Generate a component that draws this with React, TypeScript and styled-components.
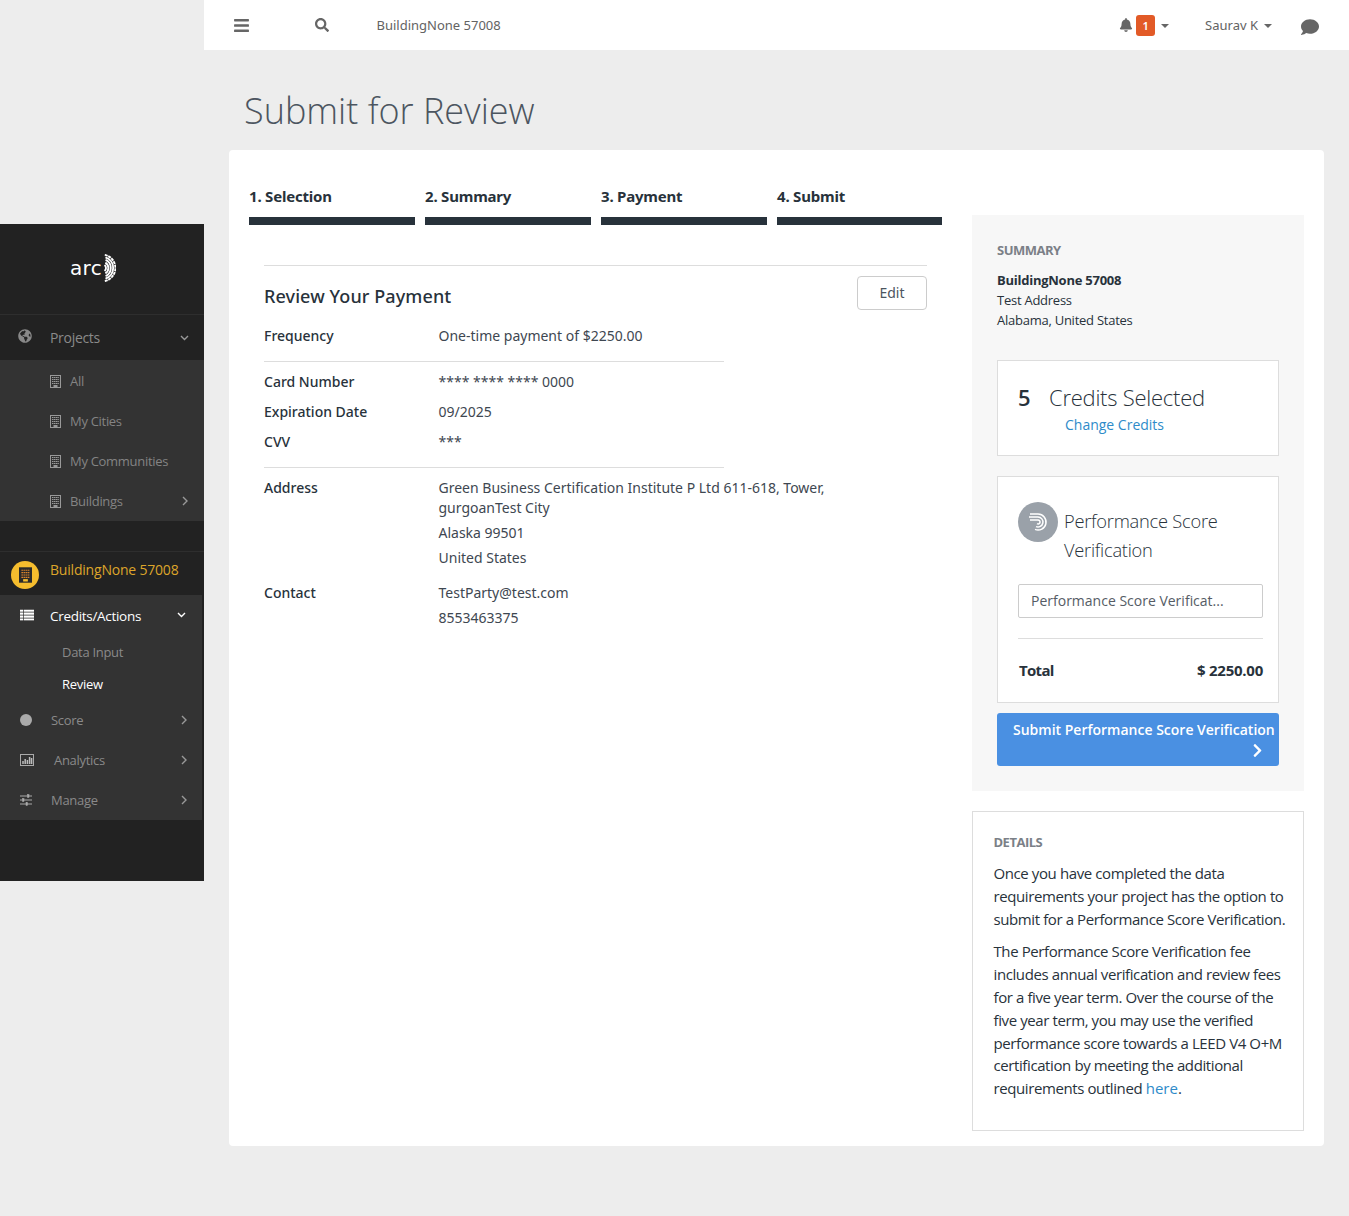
import React from "react";
import styled, { createGlobalStyle } from "styled-components";
import { FaBars, FaBell, FaChevronRight, FaComment, FaGlobeAmericas, FaSearch } from "react-icons/fa";

const GlobalStyle = createGlobalStyle`
  html, body { margin: 0; padding: 0; }
  body {
    background: #ededed;
    font-family: "Noto Sans", "Open Sans", sans-serif;
    color: #28323b;
  }
  * { box-sizing: border-box; }
`;

const BuildingIcon: React.FC<{ w?: number; h?: number; body?: string; cell?: string; line?: string; door?: string }> = ({
  w = 11,
  h = 13,
  body = "#333",
  cell = "#999",
  line = "#999",
  door = "#999",
}) => (
  <svg width={w} height={h} viewBox="0 0 11 13">
    <rect x=".5" y=".5" width="10" height="12" fill={body} stroke={line} />
    {[2, 4, 6, 8].map((y) => (
      <path key={y} d={`M2 ${y + 0.5}h7`} stroke={cell} strokeWidth="1" strokeDasharray="1.4 .4" />
    ))}
    <rect x="3.5" y="10" width="4" height="2" fill={door} />
  </svg>
);

const ChevronDown = () => (
  <svg width="9" height="6" viewBox="0 0 9 6" fill="none" stroke="currentColor" strokeWidth="1.4">
    <path d="M1 1l3.5 3.5L8 1" />
  </svg>
);

const ChevronRight = () => (
  <svg width="6" height="10" viewBox="0 0 6 10" fill="none" stroke="currentColor" strokeWidth="1.4">
    <path d="M1 1l4 4-4 4" />
  </svg>
);

const ListIcon = () => (
  <svg width="14" height="11" viewBox="0 0 14 11" fill="#fff">
    {[0, 3, 6, 9].map((y) => (
      <React.Fragment key={y}>
        <rect x="0" y={y} width="3" height="2.2" />
        <rect x="3.7" y={y} width="10.3" height="2.2" />
      </React.Fragment>
    ))}
  </svg>
);

const ChartIcon = () => (
  <svg width="14" height="12" viewBox="0 0 14 12">
    <rect x=".5" y=".5" width="13" height="11" fill="none" stroke="#aaa" />
    <path d="M3 10V7M5.2 10V5M7.4 10V6M9.6 10V3M11.6 10V4" stroke="#bbb" strokeWidth="1.5" />
  </svg>
);

const SlidersIcon = () => (
  <svg width="12" height="12" viewBox="0 0 12 12" stroke="#aaa" fill="#aaa">
    <path d="M0 2h12M0 6h12M0 10h12" strokeWidth="1" />
    <rect x="7.5" y=".5" width="1.5" height="3" strokeWidth=".5" />
    <rect x="2.5" y="4.5" width="1.5" height="3" strokeWidth=".5" />
    <rect x="6" y="8.5" width="1.5" height="3" strokeWidth=".5" />
  </svg>
);

const Dot = styled.span`
  display: block;
  width: 12px;
  height: 12px;
  border-radius: 50%;
  background: #aaa;
`;

// fan of arcs around the point just left of the mark
const arcPath = (r: number, deg: number) => {
  const a = (deg * Math.PI) / 180;
  const x = 1 + r * Math.cos(a);
  const dy = r * Math.sin(a);
  return `M${x.toFixed(2)} ${(14 - dy).toFixed(2)}A${r} ${r} 0 0 1 ${x.toFixed(2)} ${(14 + dy).toFixed(2)}`;
};

const ArcLogo = () => (
  <LogoWrap>
    <LogoText>arc</LogoText>
    <svg width="15" height="28" viewBox="0 0 15 28" fill="none" stroke="#fff" strokeWidth="1.9">
      <path d={arcPath(4, 50)} />
      <path d={arcPath(6.4, 58)} />
      <path d={arcPath(8.8, 66)} />
      <path d={arcPath(11.2, 72)} />
      <path d={arcPath(13.4, 78)} strokeDasharray="3 .7" />
    </svg>
  </LogoWrap>
);

const ScoreIcon = () => (
  <ScoreCircle>
    <svg width="20" height="20" viewBox="0 0 20 20" fill="none" stroke="#fff" strokeWidth="1.5">
      <path d="M2 2h8a8 8 0 1 1-3 15.4" />
      <path d="M1 5h9a5 5 0 1 1-2 9.6" />
      <path d="M2 8h8a2 2 0 1 1-1 3.7" />
    </svg>
  </ScoreCircle>
);

const App: React.FC = () => {
  return (
    <Page>
      <GlobalStyle />
      <Sidebar>
        <LogoBar>
          <ArcLogo />
        </LogoBar>
        <TopRow>
          <RowIcon $left={18} $top={-2}>
            <FaGlobeAmericas size={14} color="#888" />
          </RowIcon>
          <RowLabel $left={50} $size={14}>
            Projects
          </RowLabel>
          <RowArrow $right={15}>
            <ChevronDown />
          </RowArrow>
        </TopRow>
        <SubPanel>
          {["All", "My Cities", "My Communities", "Buildings"].map((name) => (
            <ProjectRow key={name}>
              <BuildingIcon />
              <ProjectLabel>{name}</ProjectLabel>
              {name === "Buildings" && (
                <RowArrow $right={16}>
                  <ChevronRight />
                </RowArrow>
              )}
            </ProjectRow>
          ))}
        </SubPanel>
        <Spacer />
        <CurrentRow>
          <CurrentBadge>
            <BuildingIcon w={13} h={16} body="#2a2a2a" line="#2a2a2a" cell="#d8822a" door="#f5bd2e" />
          </CurrentBadge>
          <CurrentName>BuildingNone 57008</CurrentName>
        </CurrentRow>
        <NavPanel>
          <NavRow $active>
            <RowIcon $left={20}>
              <ListIcon />
            </RowIcon>
            <RowLabel $left={50} $active $size={13.5}>
              Credits/Actions
            </RowLabel>
            <RowArrow $right={16} $active>
              <ChevronDown />
            </RowArrow>
          </NavRow>
          <SubLink>Data Input</SubLink>
          <SubLink $active>Review</SubLink>
          <NavRow>
            <RowIcon $left={20}>
              <Dot />
            </RowIcon>
            <RowLabel $left={51}>Score</RowLabel>
            <RowArrow $right={15}>
              <ChevronRight />
            </RowArrow>
          </NavRow>
          <NavRow>
            <RowIcon $left={20}>
              <ChartIcon />
            </RowIcon>
            <RowLabel $left={54}>Analytics</RowLabel>
            <RowArrow $right={15}>
              <ChevronRight />
            </RowArrow>
          </NavRow>
          <NavRow>
            <RowIcon $left={20}>
              <SlidersIcon />
            </RowIcon>
            <RowLabel $left={51}>Manage</RowLabel>
            <RowArrow $right={15}>
              <ChevronRight />
            </RowArrow>
          </NavRow>
        </NavPanel>
        <SidebarFoot />
      </Sidebar>

      <Main>
        <TopBar>
          <BarsButton>
            <FaBars size={17} color="#666" />
          </BarsButton>
          <SearchButton>
            <FaSearch size={14} color="#666" />
          </SearchButton>
          <TopTitle>BuildingNone 57008</TopTitle>
          <TopRight>
            <FaBell size={14} color="#666" />
            <CountBadge>1</CountBadge>
            <Caret />
            <UserName>Saurav K</UserName>
            <Caret />
            <ChatButton>
              <FaComment size={18} color="#666" />
            </ChatButton>
          </TopRight>
        </TopBar>

        <PageTitle>Submit for Review</PageTitle>

        <Card>
          <LeftColumn>
            <Steps>
              {["1. Selection", "2. Summary", "3. Payment", "4. Submit"].map((step) => (
                <Step key={step}>{step}</Step>
              ))}
            </Steps>
            <Review>
              <ReviewHead>
                <ReviewTitle>Review Your Payment</ReviewTitle>
                <EditButton>Edit</EditButton>
              </ReviewHead>
              <Row $h={30} $pad={5}>
                <Label>Frequency</Label>
                <Value>One-time payment of $2250.00</Value>
              </Row>
              <ShortRule />
              <Row $h={30}>
                <Label>Card Number</Label>
                <Value>**** **** **** 0000</Value>
              </Row>
              <Row $h={30}>
                <Label>Expiration Date</Label>
                <Value>09/2025</Value>
              </Row>
              <Row $h={30}>
                <Label>CVV</Label>
                <Value>***</Value>
              </Row>
              <ShortRule $top={5} />
              <Row>
                <Label>Address</Label>
                <Value>
                  <ValueWrap>Green Business Certification Institute P Ltd 611-618, Tower, gurgoanTest City</ValueWrap>
                  <ValueLine>Alaska 99501</ValueLine>
                  <ValueLine>United States</ValueLine>
                </Value>
              </Row>
              <Row $gap={15}>
                <Label>Contact</Label>
                <Value>
                  <div>TestParty@test.com</div>
                  <ValueLine>8553463375</ValueLine>
                </Value>
              </Row>
            </Review>
          </LeftColumn>

          <RightColumn>
            <SummaryPanel>
              <SectionTitle>SUMMARY</SectionTitle>
              <BuildingName>BuildingNone 57008</BuildingName>
              <AddressLine>Test Address</AddressLine>
              <AddressLine>Alabama, United States</AddressLine>
              <CreditsBox>
                <CreditsLine>
                  <CreditsCount>5</CreditsCount>
                  <CreditsText>Credits Selected</CreditsText>
                </CreditsLine>
                <ChangeLink>Change Credits</ChangeLink>
              </CreditsBox>
              <ScoreBox>
                <ScoreHead>
                  <ScoreIcon />
                  <ScoreName>Performance Score Verification</ScoreName>
                </ScoreHead>
                <SelectBox>Performance Score Verificat...</SelectBox>
                <TotalRow>
                  <TotalLabel>Total</TotalLabel>
                  <span>$ 2250.00</span>
                </TotalRow>
              </ScoreBox>
              <SubmitButton>
                <span>Submit Performance Score Verification</span>
                <SubmitArrow>
                  <FaChevronRight size={15} color="#fff" />
                </SubmitArrow>
              </SubmitButton>
            </SummaryPanel>
            <DetailsBox>
              <DetailsTitle>DETAILS</DetailsTitle>
              <DetailsText>
                Once you have completed the data requirements your project has the option to submit for a Performance
                Score Verification.
              </DetailsText>
              <DetailsText>
                The Performance Score Verification fee includes annual verification and review fees for a five year
                term. Over the course of the five year term, you may use the verified performance score towards a LEED
                V4 O+M certification by meeting the additional requirements outlined <BlueLink>here</BlueLink>.
              </DetailsText>
            </DetailsBox>
          </RightColumn>
        </Card>
      </Main>
    </Page>
  );
};

export default App;

const Page = styled.div`
  display: flex;
  align-items: flex-start;
  width: 1349px;
  min-height: 1216px;
`;

const Sidebar = styled.aside`
  width: 204px;
  flex: none;
  margin-top: 224px;
  background: #222222;
  font-family: "Open Sans", sans-serif;
  font-size: 13px;
  letter-spacing: -0.3px;
`;

const LogoBar = styled.div`
  height: 91px;
  border-bottom: 1px solid #2e2e2e;
  display: flex;
  justify-content: center;
  padding-top: 30px;
  padding-right: 18px;
`;

const LogoWrap = styled.div`
  display: flex;
  align-items: center;
  height: 28px;
`;

const LogoText = styled.span`
  color: #fff;
  font-family: "DejaVu Sans", sans-serif;
  font-size: 20px;
  letter-spacing: 0.3px;
  margin-right: -1px;
`;

const TopRow = styled.div`
  position: relative;
  height: 45px;
  display: flex;
  align-items: center;
`;

const RowIcon = styled.span<{ $left: number; $top?: number }>`
  position: absolute;
  left: ${(p) => p.$left}px;
  top: calc(50% + ${(p) => p.$top ?? 0}px);
  transform: translateY(-50%);
  display: flex;
`;

const RowLabel = styled.span<{ $left: number; $active?: boolean; $size?: number }>`
  margin-left: ${(p) => p.$left}px;
  color: ${(p) => (p.$active ? "#fff" : "#8a8a8a")};
  font-size: ${(p) => p.$size ?? 13}px;
`;

const RowArrow = styled.span<{ $right: number; $active?: boolean }>`
  position: absolute;
  right: ${(p) => p.$right}px;
  top: 50%;
  transform: translateY(-50%);
  display: flex;
  color: ${(p) => (p.$active ? "#fff" : "#999")};
`;

const SubPanel = styled.div`
  background: #333333;
  height: 161px;
  padding-top: 1px;
`;

const ProjectRow = styled.div`
  position: relative;
  height: 40px;
  padding-left: 50px;
  display: flex;
  align-items: center;
  gap: 9px;
`;

const ProjectLabel = styled.span`
  color: #848484;
`;

const Spacer = styled.div`
  height: 30px;
  border-bottom: 1px solid #2e2e2e;
  box-sizing: content-box;
`;

const CurrentRow = styled.div`
  height: 43px;
  display: flex;
  align-items: center;
  padding-left: 11px;
  gap: 11px;
`;

const CurrentBadge = styled.span`
  width: 28px;
  height: 28px;
  margin-top: 2px;
  border-radius: 50%;
  background: #f5bd2e;
  display: flex;
  align-items: center;
  justify-content: center;
`;

const CurrentName = styled.span`
  color: #dda52a;
  margin-top: -8px;
  font-size: 14px;
  letter-spacing: -0.2px;
`;

const NavPanel = styled.div`
  width: 202px;
  height: 225px;
  background: #333333;
`;

const NavRow = styled.div<{ $active?: boolean }>`
  position: relative;
  height: 40px;
  display: flex;
  align-items: center;
  padding-top: ${(p) => (p.$active ? "2px" : "0")};
  margin-bottom: ${(p) => (p.$active ? "1px" : "0")};
`;

const SubLink = styled.div<{ $active?: boolean }>`
  height: 32px;
  padding-left: 62px;
  display: flex;
  align-items: center;
  color: ${(p) => (p.$active ? "#fff" : "#8a8a8a")};
`;

const SidebarFoot = styled.div`
  height: 61px;
`;

const Main = styled.main`
  flex: 1;
  min-width: 0;
`;

const TopBar = styled.header`
  height: 50px;
  background: #fff;
  display: flex;
  align-items: center;
  font-size: 13px;
  color: #636363;
`;

const BarsButton = styled.span`
  display: flex;
  margin-left: 29px;
`;

const SearchButton = styled.span`
  display: flex;
  margin-left: 65px;
`;

const TopTitle = styled.span`
  margin-left: 47.5px;
`;

const TopRight = styled.div`
  margin-left: auto;
  display: flex;
  align-items: center;
  padding-right: 30px;
`;

const CountBadge = styled.span`
  width: 19px;
  height: 21px;
  margin-left: 3px;
  background: #e25a27;
  border-radius: 3px;
  color: #fff;
  font-size: 11px;
  font-weight: 600;
  display: flex;
  align-items: center;
  justify-content: center;
`;

const Caret = styled.span`
  width: 0;
  height: 0;
  margin-left: 6px;
  margin-top: 2px;
  border-left: 4px solid transparent;
  border-right: 4px solid transparent;
  border-top: 4px solid #666;
`;

const UserName = styled.span`
  margin-left: 36px;
`;

const ChatButton = styled.span`
  display: flex;
  margin-left: 29px;
  margin-top: 3px;
`;

const PageTitle = styled.h1`
  margin: 0;
  height: 100px;
  padding: 38px 0 0 40px;
  font-family: "Open Sans", sans-serif;
  font-size: 36px;
  line-height: 46px;
  font-weight: 300;
  color: #4c5560;
`;

const Card = styled.section`
  margin-left: 25px;
  width: 1095px;
  height: 996px;
  padding: 0 20px;
  background: #fff;
  border-radius: 4px;
  display: flex;
  gap: 30px;
`;

const LeftColumn = styled.div`
  width: 693px;
  flex: none;
`;

const Steps = styled.div`
  display: grid;
  grid-template-columns: 166px 166px 166px 165px;
  gap: 10px;
  padding-top: 36px;
`;

const Step = styled.div`
  height: 39px;
  border-bottom: 8px solid #28323b;
  font-size: 15px;
  font-weight: 700;
  line-height: 20px;
  letter-spacing: -0.2px;
`;

const Review = styled.div`
  margin: 40px 15px 0;
  border-top: 1px solid #dddddd;
  font-size: 14px;
`;

const ReviewHead = styled.div`
  display: flex;
  justify-content: space-between;
  padding-top: 10px;
  height: 55px;
`;

const ReviewTitle = styled.h2`
  margin: 8px 0 0;
  font-size: 18px;
  line-height: 24px;
  font-weight: 500;
  letter-spacing: 0.1px;
`;

const EditButton = styled.button`
  width: 70px;
  height: 34px;
  padding: 0 0 2px;
  background: #fff;
  border: 1px solid #cccccc;
  border-radius: 4px;
  color: #4c5560;
  font-family: inherit;
  font-size: 14px;
`;

const Row = styled.div<{ $h?: number; $gap?: number; $pad?: number }>`
  display: flex;
  line-height: 20px;
  min-height: ${(p) => p.$h ?? 20}px;
  margin-top: ${(p) => p.$gap ?? 0}px;
  padding-top: ${(p) => p.$pad ?? 0}px;
`;

const Label = styled.div`
  width: 174.5px;
  flex: none;
  font-weight: 500;
`;

const Value = styled.div`
  color: #3e4751;
`;

const ValueWrap = styled.div`
  width: 400px;
`;

const ValueLine = styled.div`
  margin-top: 5px;
`;

const ShortRule = styled.div<{ $top?: number }>`
  width: 460px;
  height: 1px;
  background: #dddddd;
  margin: ${(p) => p.$top ?? 10}px 0 10px;
`;

const RightColumn = styled.div`
  width: 332px;
  flex: none;
  padding-top: 65px;
  font-family: "Open Sans", sans-serif;
`;

const SummaryPanel = styled.div`
  height: 576px;
  background: #f7f7f7;
  padding: 25px;
  font-size: 13px;
  letter-spacing: -0.25px;
`;

const SectionTitle = styled.div`
  font-size: 13px;
  line-height: 20px;
  font-weight: 700;
  letter-spacing: -0.5px;
  color: #7b8087;
  margin-bottom: 10px;
`;

const BuildingName = styled.div`
  font-weight: 700;
  line-height: 20px;
`;

const AddressLine = styled.div`
  line-height: 20px;
`;

const CreditsBox = styled.div`
  width: 282px;
  height: 96px;
  margin-top: 30px;
  padding: 21px 20px 0;
  background: #fff;
  border: 1px solid #dddddd;
`;

const CreditsLine = styled.div`
  display: flex;
  align-items: center;
  height: 30px;
`;

const CreditsCount = styled.span`
  width: 31px;
  font-size: 22px;
  font-weight: 600;
`;

const CreditsText = styled.span`
  font-size: 22px;
  font-weight: 300;
`;

const ChangeLink = styled.a`
  display: block;
  margin: 3px 0 0 47px;
  color: #2e8bc9;
  font-size: 14px;
  line-height: 20px;
  letter-spacing: 0;
`;

const ScoreBox = styled.div`
  width: 282px;
  height: 227px;
  margin-top: 20px;
  padding: 25px 15px 0 20px;
  background: #fff;
  border: 1px solid #dddddd;
`;

const ScoreHead = styled.div`
  display: flex;
  gap: 6px;
  height: 82px;
`;

const ScoreCircle = styled.span`
  width: 40px;
  height: 40px;
  flex: none;
  border-radius: 50%;
  background: #9aa1a9;
  display: flex;
  align-items: center;
  justify-content: center;
`;

const ScoreName = styled.span`
  font-size: 18.3px;
  line-height: 29px;
  font-weight: 300;
  margin-top: 4px;
`;

const SelectBox = styled.div`
  height: 34px;
  padding: 0 12px 2px;
  border: 1px solid #cccccc;
  border-radius: 2px;
  display: flex;
  align-items: center;
  font-size: 14px;
  letter-spacing: 0;
  color: #555c65;
`;

const TotalRow = styled.div`
  display: flex;
  justify-content: space-between;
  margin-top: 20px;
  padding-top: 20px;
  border-top: 1px solid #dddddd;
  font-size: 15px;
  line-height: 22px;
  font-weight: 700;
`;

const TotalLabel = styled.span`
  margin-left: 1px;
  letter-spacing: -0.7px;
`;

const SubmitButton = styled.div`
  width: 282px;
  height: 53px;
  margin-top: 10px;
  padding: 7px 4px 0 16px;
  background: #4a90e2;
  border-radius: 3px;
  color: #fff;
  font-size: 14px;
  line-height: 20px;
  font-weight: 600;
  letter-spacing: 0;
  white-space: nowrap;
`;

const SubmitArrow = styled.div`
  display: flex;
  justify-content: flex-end;
  padding: 3px 10px 0 0;
`;

const DetailsBox = styled.div`
  height: 320px;
  margin-top: 20px;
  padding: 20px 16px 0 20.5px;
  border: 1px solid #dddddd;
  font-size: 15px;
  letter-spacing: -0.4px;
`;

const DetailsTitle = styled(SectionTitle)`
  margin-bottom: 10px;
`;

const DetailsText = styled.p`
  margin: 0 0 10px;
  line-height: 22.8px;
`;

const BlueLink = styled.a`
  color: #2e8bc9;
  letter-spacing: 0;
`;
